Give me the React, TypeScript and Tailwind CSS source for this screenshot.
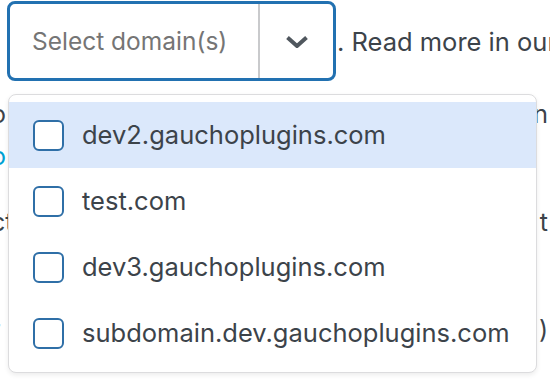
const domains = [
  "dev2.gauchoplugins.com",
  "test.com",
  "dev3.gauchoplugins.com",
  "subdomain.dev.gauchoplugins.com",
];

const Chevron = () => (
  <svg width="24" height="14" viewBox="0 0 24 14" fill="none">
    <path
      d="M2.5 2.5 L12 11 L21.5 2.5"
      stroke="#50575e"
      strokeWidth="4"
      strokeLinejoin="round"
    />
  </svg>
);

const App = () => {
  return (
    <div className="relative w-[550px] h-[380px] overflow-hidden bg-white font-['Inter','Liberation_Sans',sans-serif] text-[#3c434a]">
      {/* select control */}
      <div className="flex items-center pt-[1px] pl-[7px]">
        <div className="flex h-[80px] w-[329px] shrink-0 rounded-[8px] border-[3px] border-[#2271b1] bg-white">
          <div className="flex flex-1 items-center pl-[22px] text-[24.5px] text-[#757575]">
            Select domain(s)
          </div>
          <div className="w-[2px] bg-[#c9cacc]" />
          <div className="flex w-[73px] items-center justify-center pt-[2px]">
            <Chevron />
          </div>
        </div>
        <span className="whitespace-nowrap pl-[1px] pt-[2px] text-[25.5px]">
          . Read more in our
        </span>
      </div>

      {/* page text behind the menu */}
      <div className="mt-[17px] -ml-[9px] w-[557px] text-[25px] leading-[32px]">
        <div className="flex justify-between">
          <span>o</span>
          <span>n</span>
        </div>
        <div className="mt-[10px] flex justify-between text-[#00a0d2]">
          <span>o</span>
        </div>
        <div className="mt-[34px] flex justify-between">
          <span>ct</span>
          <span>t</span>
        </div>
        <div className="mt-[75px] flex justify-between">
          <span>r</span>
          <span>)</span>
        </div>
      </div>

      {/* dropdown menu */}
      <div className="absolute left-[8px] top-[94px] w-[529px] rounded-[8px] border border-[#dcdcde] bg-white pt-[7px] pb-[6px] shadow-[0_2px_5px_rgba(0,0,0,0.08)]">
        {domains.map((d, i) => (
          <div
            key={d}
            className={`flex h-[66px] items-center gap-[18px] pl-[24px] ${i === 0 ? "bg-[#dbe8fb]" : ""}`}
          >
            <span className="h-[31px] w-[31px] shrink-0 rounded-[6px] border-2 border-[#2f6fa7] bg-white" />
            <span className="text-[25.5px] text-[#3c434a]">{d}</span>
          </div>
        ))}
      </div>
    </div>
  );
};

export default App;
